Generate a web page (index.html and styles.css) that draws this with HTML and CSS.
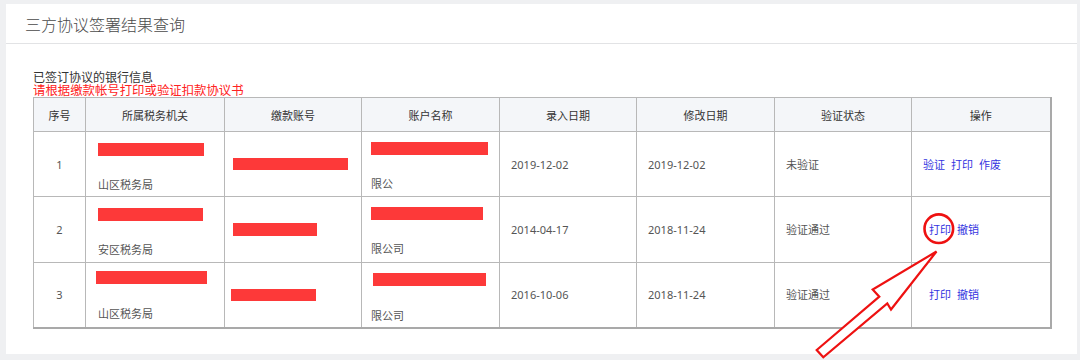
FILE: index.html
```html
<!DOCTYPE html>
<html lang="zh-CN">
<head>
<meta charset="utf-8">
<title>三方协议签署结果查询</title>
<link rel="stylesheet" href="styles.css">
</head>
<body>
<div class="panel">
  <div class="panel-title">三方协议签署结果查询</div>
  <div class="panel-body">
    <div class="info">已签订协议的银行信息</div>
    <div class="hint">请根据缴款帐号打印或验证扣款协议书</div>
    <table class="grid">
      <colgroup>
        <col class="c1"><col class="c2"><col class="c3"><col class="c4">
        <col class="c5"><col class="c6"><col class="c7"><col class="c8">
      </colgroup>
      <thead>
        <tr>
          <th>序号</th><th>所属税务机关</th><th>缴款账号</th><th>账户名称</th>
          <th>录入日期</th><th>修改日期</th><th>验证状态</th><th>操作</th>
        </tr>
      </thead>
      <tbody>
        <tr class="r1">
          <td class="no">1</td>
          <td class="org"><span class="bar" style="width:106px"></span><div class="sub">山区税务局</div></td>
          <td class="acct"><span class="bar" style="width:115px"></span></td>
          <td class="name"><span class="bar" style="width:117px"></span><div class="sub">限公</div></td>
          <td class="txt">2019-12-02</td>
          <td class="txt">2019-12-02</td>
          <td class="txt">未验证</td>
          <td class="ops"><a>验证</a><a>打印</a><a>作废</a></td>
        </tr>
        <tr class="r2">
          <td class="no">2</td>
          <td class="org"><span class="bar" style="width:105px"></span><div class="sub">安区税务局</div></td>
          <td class="acct"><span class="bar" style="width:84px"></span></td>
          <td class="name"><span class="bar" style="width:112px"></span><div class="sub">限公司</div></td>
          <td class="txt">2014-04-17</td>
          <td class="txt">2018-11-24</td>
          <td class="txt">验证通过</td>
          <td class="ops ops-in"><a>打印</a><a>撤销</a></td>
        </tr>
        <tr class="r3">
          <td class="no">3</td>
          <td class="org"><span class="bar bar-wide" style="width:111px"></span><div class="sub">山区税务局</div></td>
          <td class="acct"><span class="bar bar-l" style="width:85px"></span></td>
          <td class="name"><span class="bar bar-rr" style="width:113px"></span><div class="sub">限公司</div></td>
          <td class="txt">2016-10-06</td>
          <td class="txt">2018-11-24</td>
          <td class="txt">验证通过</td>
          <td class="ops ops-in"><a>打印</a><a>撤销</a></td>
        </tr>
      </tbody>
    </table>
  </div>
</div>
<svg class="annot" width="1080" height="360" viewBox="0 0 1080 360" aria-hidden="true">
  <circle cx="938.8" cy="228.7" r="14.3" fill="none" stroke="#ee1111" stroke-width="2.6"/>
  <polygon points="936.5,251.5 872.7,289.5 879.3,296.7 816.7,350 823.3,357.3 887.3,303.5 891,309.5"
    fill="#ffffff" stroke="#ee1111" stroke-width="2.2" stroke-linejoin="miter"/>
</svg>
</body>
</html>
```

FILE: styles.css
```css
* { box-sizing: border-box; }

html, body {
  margin: 0;
  padding: 0;
}

body {
  width: 1080px;
  height: 360px;
  background: #eff0f2;
  font-family: "Noto Sans", "Noto Sans CJK SC", sans-serif;
  color: #555;
  position: relative;
  overflow: hidden;
  padding: 4px 3px 0 6px;
}

.panel {
  background: #ffffff;
  width: 1071px;
  height: 350px;
}

.panel-title {
  height: 40px;
  line-height: 40px;
  padding-left: 19px;
  font-size: 16px;
  color: #4a4a4a;
  border-bottom: 1px solid #e2e3e5;
  font-family: "Noto Sans CJK SC", sans-serif;
  font-weight: 300;
}

.panel-body {
  padding: 27px 0 0 27px;
}

.info,
.hint {
  font-family: "Noto Sans CJK SC", sans-serif;
  font-size: 12px;
  line-height: 12.5px;
  height: 12.5px;
  color: #333;
  white-space: nowrap;
}

.hint {
  color: #ff2222;
  font-size: 12.4px;
}

.grid {
  margin-top: 1px;
  width: 1017px;
  table-layout: fixed;
  border-collapse: collapse;
  border-right: 2px solid #a9a9a9;
  border-bottom: 2px solid #a9a9a9;
  font-size: 11px;
}

.c1 { width: 52px; }
.c2 { width: 139px; }
.c3 { width: 137px; }
.c4 { width: 138px; }
.c5 { width: 137px; }
.c6 { width: 138px; }
.c7 { width: 137px; }
.c8 { width: 139px; }

.grid th,
.grid td {
  border: 1px solid #b8b8b8;
  padding: 0;
}

.grid th {
  height: 34px;
  background: #f4f6f9;
  font-weight: normal;
  color: #333;
  text-align: center;
  vertical-align: middle;
  font-family: "Noto Sans CJK SC", sans-serif;
}

.grid tbody tr { height: 65px; }
.grid tbody tr.r2 { height: 66px; }

.grid td {
  vertical-align: middle;
  line-height: 17px;
  white-space: nowrap;
}

.grid td.no {
  text-align: center;
  color: #555;
}

.grid td.txt {
  padding-left: 11px;
  color: #555;
}

.grid td.org {
  vertical-align: top;
  padding: 11px 0 0 12px;
}

.grid td.name {
  vertical-align: top;
  padding: 10px 0 0 9px;
}

.grid td.acct {
  padding-left: 8px;
}

.bar {
  display: block;
  height: 12.5px;
  background: #fd3939;
}

.bar-wide { margin-left: -2px; margin-top: -3px; }
.bar-l { margin-left: -2px; }
.bar-rr { margin-left: 2px; }

.sub {
  margin-top: 20px;
  color: #555;
  font-family: "Noto Sans CJK SC", sans-serif;
}

.r3 .sub { margin-top: 21px; }

.grid td.ops {
  padding-left: 11px;
}

.grid td.ops-in {
  padding-left: 17px;
}

.ops a {
  color: #3434e0;
  margin-right: 6px;
  cursor: pointer;
  font-family: "Noto Sans CJK SC", sans-serif;
}

.annot {
  position: absolute;
  left: 0;
  top: 0;
  pointer-events: none;
}
```
